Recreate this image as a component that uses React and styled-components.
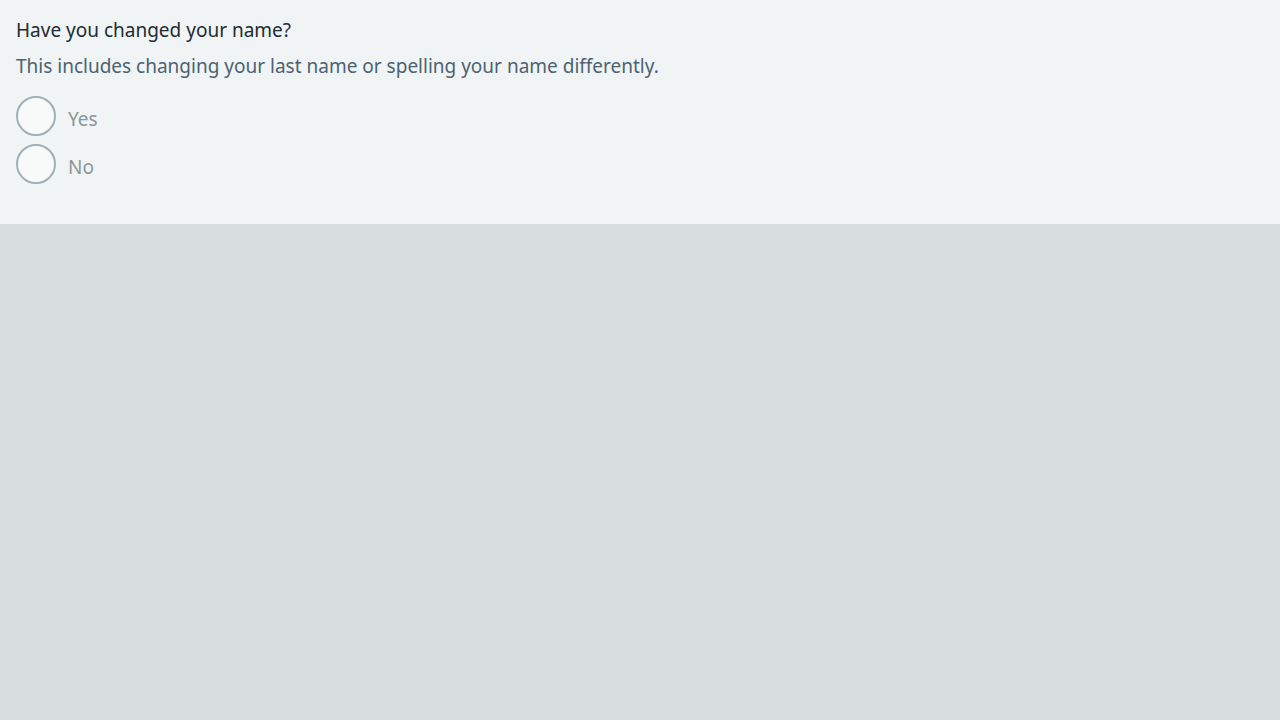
import React from "react";
import styled, { createGlobalStyle } from "styled-components";

const GlobalStyle = createGlobalStyle`
  html, body {
    margin: 0;
    padding: 0;
    background: #d8dde0;
    font-family: "Noto Sans", "Open Sans", sans-serif;
  }
`;

const Panel = styled.fieldset`
  margin: 0;
  border: none;
  background: #f0f4f5;
  padding: 16px 16px 40px;
  display: flex;
  flex-direction: column;
`;

const Legend = styled.div`
  font-size: 19px;
  line-height: 28px;
  color: #212b32;
`;

const Hint = styled.div`
  font-size: 19px;
  line-height: 28px;
  color: #4c6272;
  margin-top: 8px;
`;

const Options = styled.div`
  display: flex;
  flex-direction: column;
  gap: 8px;
  margin-top: 16px;
`;

const Option = styled.label`
  display: flex;
  align-items: center;
  gap: 12px;
`;

const Circle = styled.span`
  box-sizing: border-box;
  width: 40px;
  height: 40px;
  border-radius: 50%;
  border: 2px solid #a1afb6;
  background: #f8fafa;
`;

const Label = styled.span`
  font-size: 19px;
  color: #8d9499;
  padding-top: 6px;
`;

const options = ["Yes", "No"];

const App = () => (
  <>
    <GlobalStyle />
    <Panel>
      <Legend>Have you changed your name?</Legend>
      <Hint>This includes changing your last name or spelling your name differently.</Hint>
      <Options>
        {options.map((o) => (
          <Option key={o}>
            <Circle />
            <Label>{o}</Label>
          </Option>
        ))}
      </Options>
    </Panel>
  </>
);

export default App;
